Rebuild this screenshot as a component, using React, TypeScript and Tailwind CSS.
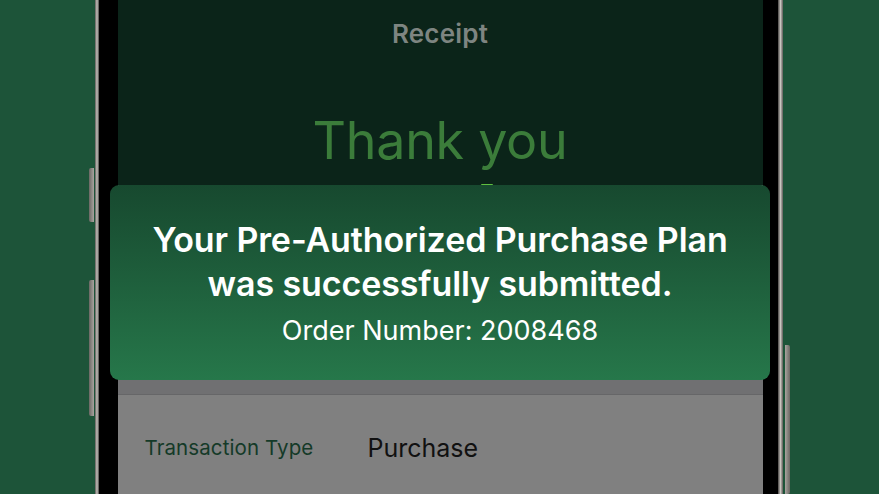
import React from 'react'

export default function App() {
  return (
    <div className="relative w-[879px] h-[494px] overflow-hidden bg-[#1d5439] flex justify-center font-[Inter,_sans-serif]">
      {/* side buttons */}
      <div className="absolute left-[89px] top-[168px] w-[5px] h-[54px] rounded-l-[2px] bg-gradient-to-r from-[#6b6864] to-[#a9a5a0]" />
      <div className="absolute left-[89px] top-[280px] w-[5px] h-[136px] rounded-l-[2px] bg-gradient-to-r from-[#6b6864] to-[#a9a5a0]" />
      <div className="absolute left-[785px] top-[345px] w-[5px] h-[149px] rounded-r-[2px] bg-gradient-to-r from-[#a9a5a0] to-[#6b6864]" />

      {/* phone frame */}
      <div className="h-full w-[702px] pl-[6px] pr-[8px] flex">
        <div className="w-[4px] h-full bg-gradient-to-r from-[#5e5b58] via-[#c9c5c0] to-[#4a4846]" />
        <div className="flex-1 h-full bg-black pl-[19px] pr-[15px] flex">
          <div className="flex-1 h-full flex flex-col">
            <div className="h-[185px] bg-[#0b2419] flex flex-col items-center overflow-hidden">
              <div className="mt-[18px] text-[26px] font-semibold text-[#7e8581] leading-[32px] tracking-[0.2px]">
                Receipt
              </div>
              <div className="mt-[56px] text-[52px] leading-[70px] text-[#3b7c3a] tracking-[-0.3px]">
                Thank you
              </div>
              <div className="ml-[94px] mt-[8px] w-[12px] h-[6px] rounded-t-full bg-[#5fbf40]" />
            </div>
            <div className="h-[210px] bg-[#707072] border-b border-[#666668]" />
            <div className="flex-1 bg-[#808080] flex items-center pl-[27px] pt-[8px]">
              <div className="w-[223px] text-[20.5px] text-[#143a28] tracking-[0.1px]">Transaction Type</div>
              <div className="text-[25px] text-[#111111]">Purchase</div>
            </div>
          </div>
        </div>
        <div className="w-[5px] h-full bg-gradient-to-r from-[#4a4846] via-[#c9c5c0] to-[#5e5b58]" />
      </div>

      {/* toast */}
      <div className="absolute left-[110px] top-[185px] w-[660px] h-[195px] rounded-[9px] bg-gradient-to-b from-[#17492f] to-[#26774a] flex flex-col items-center pt-[33px] text-white">
        <div className="text-[34px] font-semibold leading-[44px] text-center tracking-[-0.1px] whitespace-nowrap">
          Your Pre-Authorized Purchase Plan
          <br />
          was successfully submitted.
        </div>
        <div className="mt-[9px] text-[27px] leading-[32px]">Order Number: 2008468</div>
      </div>
    </div>
  )
}
